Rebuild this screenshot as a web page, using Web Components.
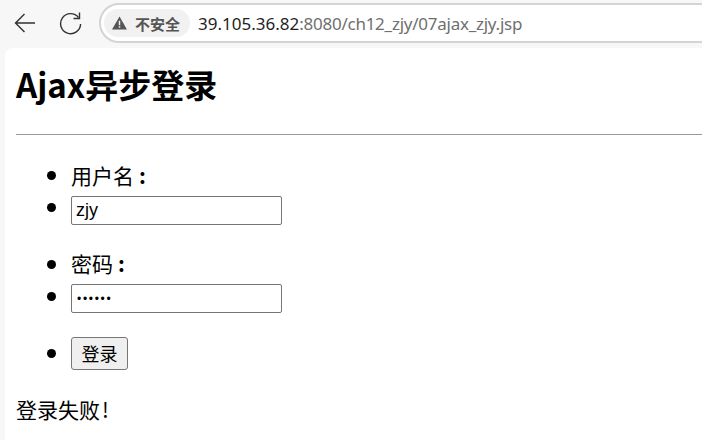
<!DOCTYPE html>
<html lang="zh"><head><meta charset="utf-8"><title>Ajax异步登录</title>
<style>
html,body{margin:0;padding:0;height:100%;overflow:hidden;background:#f7f7f7}
body{display:flex;flex-direction:column;width:702px;height:440px;font-family:"Liberation Sans","Noto Sans CJK SC",sans-serif}
</style></head><body>
<browser-toolbar host="39.105.36.82" rest=":8080/ch12_zjy/07ajax_zjy.jsp"></browser-toolbar>
<page-frame>
  <login-page></login-page>
</page-frame>
<script>
const F='"Liberation Sans","Noto Sans CJK SC",sans-serif';
const C='"Noto Sans CJK SC",sans-serif';
customElements.define('browser-toolbar',class extends HTMLElement{
  connectedCallback(){
    const s=this.attachShadow({mode:'open'});
    s.innerHTML=`<style>
:host{display:flex;align-items:flex-start;height:48px;flex:none;box-sizing:border-box;padding:3px 0 0 13px;background:#f7f7f7;font-family:${F}}
svg{display:block;flex:none}
.back{margin-top:8px}.reload{margin:8px 0 0 22px}
.bar{flex:1;height:40px;margin-left:16px;margin-right:-20px;box-sizing:border-box;border:2px solid #d4d4d4;border-radius:20px 0 0 20px;background:#fff;display:flex;align-items:center;padding-left:3px;min-width:0}
.chip{display:flex;align-items:center;height:28px;border-radius:14px;background:#f1f1f1;padding:0 10px 0 8px;gap:8px;color:#555;font:700 15px ${C};white-space:nowrap}
.url{margin-left:8px;font:17px "Noto Sans",sans-serif;color:#6f6f6f;white-space:nowrap;letter-spacing:-.25px}
.url b{font-weight:400;color:#1f1f1f;letter-spacing:0}
</style>
<svg class="back" width="24" height="24" viewBox="0 0 24 24" fill="none" stroke="#333" stroke-width="1.4"><path d="M22 12H2.5M11.5 3L2.5 12l9 9"/></svg>
<svg class="reload" width="24" height="24" viewBox="0 0 24 24" fill="none" stroke="#333" stroke-width="1.4"><path d="M19.5 6.5A10 10 0 1 0 21.6 13"/><path d="M20.5 1.5V7.5H14.5"/></svg>
<div class="bar"><div class="chip"><svg width="15" height="14" viewBox="0 0 16 15"><path d="M8 .5 16 14.5H0Z" fill="#555"/><path d="M7.2 5h1.6v5H7.2zM7.2 11h1.6v1.6H7.2z" fill="#f1f1f1"/></svg><span>不安全</span></div>
<div class="url"><b>${this.getAttribute('host')}</b>${this.getAttribute('rest')}</div></div>`;
  }
});
customElements.define('page-frame',class extends HTMLElement{
  connectedCallback(){
    const s=this.attachShadow({mode:'open'});
    s.innerHTML=`<style>:host{display:block;flex:1;min-height:0;margin-left:5px;background:#fff;border-radius:8px 0 0 0;overflow:hidden;box-sizing:border-box;padding:0 0 0 11px}</style><slot></slot>`;
  }
});
customElements.define('list-row',class extends HTMLElement{
  connectedCallback(){
    const s=this.attachShadow({mode:'open'});
    const dot=this.getAttribute('dot')||'7';
    s.innerHTML=`<style>
:host{display:flex;align-items:flex-start;gap:15px}
i{flex:none;width:9px;height:9px;border-radius:50%;background:#000;margin-top:${dot}px}
.c{flex:1;min-width:0;display:flex}
</style><i></i><div class="c"><slot></slot></div>`;
  }
});
customElements.define('login-page',class extends HTMLElement{
  connectedCallback(){
    const s=this.attachShadow({mode:'open'});
    s.innerHTML=`<style>
:host{display:block;color:#000;font-family:${C};font-size:21px;line-height:22px}
h1{font:700 33px/37px ${C};margin:18px 0 31px}
hr{margin:0 0 29px;border:0;height:1px;background:#9a9a9a}
.list{display:flex;flex-direction:column;padding-left:31px}
.t{display:block;height:24px}
.t span{margin-left:5px;font-weight:700}
input{box-sizing:border-box;width:211px;height:29px;font:18px ${F};padding:1px 4px;border:1px solid #767676;border-radius:2px;margin:0;color:#000;outline:0;display:block}
input[type=password]{font-size:12px;letter-spacing:1.7px;padding-left:5px}
button{box-sizing:border-box;width:57px;height:33px;font:18px ${C};padding:0 0 2px;border:1px solid #767676;border-radius:3px;background:#efefef;color:#000;display:block}
p{margin:28px 0 0}
p span{margin-left:2px}
</style>
<h1>Ajax异步登录</h1><hr>
<div class="list">
<list-row dot="7"><span class="t">用户名<span>:</span></span></list-row>
<list-row dot="7" style="margin-top:8px"><input type="text" value="zjy"></list-row>
<list-row dot="8" style="margin-top:27px"><span class="t">密码<span>:</span></span></list-row>
<list-row dot="8" style="margin-top:8px"><input type="password" value="123456"></list-row>
<list-row dot="12" style="margin-top:24px"><button>登录</button></list-row>
</div>
<p>登录失败<span>!</span></p>`;
  }
});
</script></body></html>
